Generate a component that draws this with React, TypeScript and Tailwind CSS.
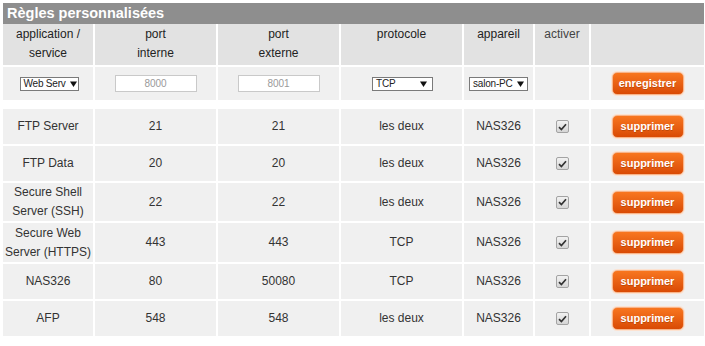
import React from "react";

type Rule = {
  app: string[];
  internal: string;
  external: string;
  protocol: string;
  device: string;
  h: string;
};

const RULES: Rule[] = [
  { app: ["FTP Server"], internal: "21", external: "21", protocol: "les deux", device: "NAS326", h: "h-[35px]" },
  { app: ["FTP Data"], internal: "20", external: "20", protocol: "les deux", device: "NAS326", h: "h-[35px]" },
  { app: ["Secure Shell", "Server (SSH)"], internal: "22", external: "22", protocol: "les deux", device: "NAS326", h: "h-[38px]" },
  { app: ["Secure Web", "Server (HTTPS)"], internal: "443", external: "443", protocol: "TCP", device: "NAS326", h: "h-[39px]" },
  { app: ["NAS326"], internal: "80", external: "50080", protocol: "TCP", device: "NAS326", h: "h-[35px]" },
  { app: ["AFP"], internal: "548", external: "548", protocol: "les deux", device: "NAS326", h: "h-[35px]" },
];

const COLS = "grid grid-cols-[90px_121px_121px_121px_69px_54px_1fr] gap-x-[2px]";

function Arrow() {
  return (
    <svg width="7" height="6" viewBox="0 0 7 6" className="shrink-0">
      <path d="M0 0.5 H7 L3.5 6 Z" fill="#111" />
    </svg>
  );
}

function FakeSelect({ value, width }: { value: string; width: string }) {
  return (
    <div className={`flex h-[14px] ${width} items-center border border-[#7a7a7a] bg-white pl-[3px] pr-[5px]`}>
      <span className="whitespace-nowrap text-[10px] leading-none tracking-[-0.2px] text-[#222]">{value}</span>
      <span className="min-w-[4px] flex-1" />
      <Arrow />
    </div>
  );
}

function OrangeButton({ label }: { label: string }) {
  return (
    <button
      type="button"
      className="flex h-[23px] w-[72px] items-center justify-center rounded-[5px] border border-[#f7b48a] bg-gradient-to-b from-[#f8761f] to-[#d94a04] text-[11px] font-bold text-white shadow-[0_0_0_1px_#fde2d0] [text-shadow:0_1px_0_rgba(120,40,0,0.35)]"
    >
      {label}
    </button>
  );
}

function CheckedBox() {
  return (
    <span className="flex h-[13px] w-[13px] items-center justify-center rounded-[2px] border border-[#a3a3a3] bg-gradient-to-b from-[#f2f2f2] to-[#d6d6d6]">
      <svg width="9" height="8" viewBox="0 0 9 8">
        <path d="M1 4.2 L3.4 6.6 L8 1.2" fill="none" stroke="#333" strokeWidth="1.7" />
      </svg>
    </span>
  );
}

export default function App() {
  const head = "bg-[#e2e2e2] pt-[1px] text-center text-[12px] leading-[19px] text-[#222]";
  const inputCell = "flex items-center justify-center bg-[#f0f0f0]";
  const cell = "flex flex-col items-center justify-center bg-[#f0f0f0] text-center text-[12px] leading-[19px] text-[#333]";
  const field = "h-[17px] w-[82px] border border-[#c9c9c9] bg-white text-center text-[10px] text-[#9a9a9a] outline-none";

  return (
    <div className="min-h-screen bg-white pl-[3px] pr-[1px] pt-[3px] font-['Liberation_Sans',Arial,sans-serif]">
      <div className="flex h-[21px] items-center bg-[#8e8e8e] pl-[4px] text-[14.5px] font-bold text-white">
        Règles personnalisées
      </div>

      <div className={`${COLS} h-[41px]`}>
        <div className={head}>application /<br />service</div>
        <div className={head}>port<br />interne</div>
        <div className={head}>port<br />externe</div>
        <div className={head}>protocole</div>
        <div className={head}>appareil</div>
        <div className={`${head} text-[#444]`}>activer</div>
        <div className={head} />
      </div>

      <div className={`${COLS} mt-[2px] h-[33px]`}>
        <div className={`${inputCell} pl-[2px]`}>
          <FakeSelect value="Web Serv" width="w-[59px]" />
        </div>
        <div className={inputCell}>
          <input readOnly value="8000" className={field} />
        </div>
        <div className={inputCell}>
          <input readOnly value="8001" className={field} />
        </div>
        <div className={`${inputCell} pl-[2px]`}>
          <FakeSelect value="TCP" width="w-[61px]" />
        </div>
        <div className={inputCell}>
          <FakeSelect value="salon-PC" width="w-[59px]" />
        </div>
        <div className={inputCell} />
        <div className={inputCell}>
          <OrangeButton label="enregistrer" />
        </div>
      </div>

      <div className="mt-[9px] flex flex-col gap-y-[2px]">
        {RULES.map((r, i) => (
          <div key={i} className={`${COLS} ${r.h}`}>
            <div className={cell}>
              {r.app.map((line) => (
                <span key={line}>{line}</span>
              ))}
            </div>
            <div className={cell}>{r.internal}</div>
            <div className={cell}>{r.external}</div>
            <div className={cell}>{r.protocol}</div>
            <div className={cell}>{r.device}</div>
            <div className={cell}>
              <CheckedBox />
            </div>
            <div className={cell}>
              <OrangeButton label="supprimer" />
            </div>
          </div>
        ))}
      </div>
    </div>
  );
}
